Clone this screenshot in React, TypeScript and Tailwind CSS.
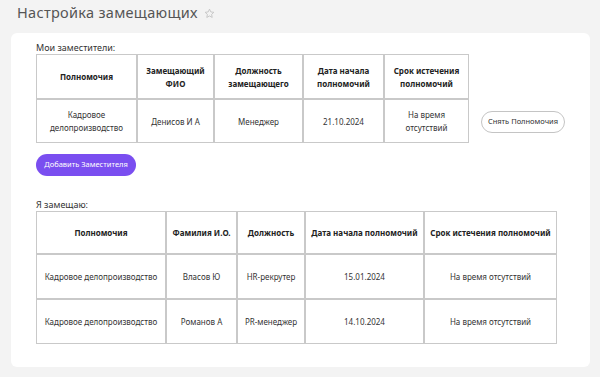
import React from 'react';

const myDeputies = [
  { power: 'Кадровое делопроизводство', name: 'Денисов И А', position: 'Менеджер', start: '21.10.2024', end: 'На время отсутствий' },
];

const iReplace = [
  { power: 'Кадровое делопроизводство', name: 'Власов Ю', position: 'HR-рекрутер', start: '15.01.2024', end: 'На время отсутствий' },
  { power: 'Кадровое делопроизводство', name: 'Романов А', position: 'PR-менеджер', start: '14.10.2024', end: 'На время отсутствий' },
];

const th = 'border border-[#c9c9c9] px-1 font-bold text-[#222] text-center align-middle leading-[13px]';
const td = 'border border-[#c9c9c9] px-1 text-[#333] text-center align-middle leading-[13px]';

const App: React.FC = () => {
  return (
    <div className="w-[600px] h-[377px] bg-[#f3f3f3] overflow-hidden" style={{ fontFamily: '"Noto Sans", Inter, sans-serif' }}>
      <div className="flex items-center gap-1.5 pl-[17px] h-[26px]">
        <h1 className="text-[14.5px] text-[#555] tracking-[0.3px]">Настройка замещающих</h1>
        <svg width="11" height="11" viewBox="0 0 24 24" fill="none" stroke="#c4c4c4" strokeWidth="2" strokeLinejoin="round">
          <path d="M12 2.5l2.9 6.1 6.6.8-4.9 4.6 1.3 6.6L12 17.3l-5.9 3.3 1.3-6.6-4.9-4.6 6.6-.8z" />
        </svg>
      </div>

      <div className="mt-[7px] ml-[11px] w-[579px] h-[334px] bg-white rounded-[6px] pl-[25px] pt-[9px]">
        <div className="text-[9px] text-[#333] leading-[12px]">Мои заместители:</div>
        <div className="flex items-center">
          <table className="table-fixed border-separate border-spacing-0 text-[8px]">
            <colgroup>
              <col className="w-[101px]" />
              <col className="w-[77px]" />
              <col className="w-[89px]" />
              <col className="w-[81px]" />
              <col className="w-[85px]" />
            </colgroup>
            <thead>
              <tr className="h-[45px]">
                <th className={th}>Полномочия</th>
                <th className={th}>Замещающий ФИО</th>
                <th className={th}>Должность замещающего</th>
                <th className={th}>Дата начала полномочий</th>
                <th className={th}>Срок истечения полномочий</th>
              </tr>
            </thead>
            <tbody>
              {myDeputies.map((r, i) => (
                <tr key={i} className="h-[44px]">
                  <td className={td}>{r.power}</td>
                  <td className={td}>{r.name}</td>
                  <td className={td}>{r.position}</td>
                  <td className={td}>{r.start}</td>
                  <td className={td}>{r.end}</td>
                </tr>
              ))}
            </tbody>
          </table>
          <div className="self-end mb-[10px] ml-[12px]">
            <button className="w-[84px] h-[22px] rounded-full border border-[#c4c4c4] bg-white text-[7.5px] text-[#333]">Снять Полномочия</button>
          </div>
        </div>

        <button className="mt-[11px] w-[100px] h-[22px] rounded-full bg-[#7a4ef0] text-white text-[7.5px]">Добавить Заместителя</button>

        <div className="mt-[23px] text-[9px] text-[#333] leading-[12px]">Я замещаю:</div>
        <table className="table-fixed border-separate border-spacing-0 text-[8px]">
          <colgroup>
            <col className="w-[130px]" />
            <col className="w-[71px]" />
            <col className="w-[68px]" />
            <col className="w-[119px]" />
            <col className="w-[133px]" />
          </colgroup>
          <thead>
            <tr className="h-[43px]">
              <th className={th}>Полномочия</th>
              <th className={th}>Фамилия И.О.</th>
              <th className={th}>Должность</th>
              <th className={th}>Дата начала полномочий</th>
              <th className={th}>Срок истечения полномочий</th>
            </tr>
          </thead>
          <tbody>
            {iReplace.map((r, i) => (
              <tr key={i} className="h-[45px]">
                <td className={td}>{r.power}</td>
                <td className={td}>{r.name}</td>
                <td className={td}>{r.position}</td>
                <td className={td}>{r.start}</td>
                <td className={td}>{r.end}</td>
              </tr>
            ))}
          </tbody>
        </table>
      </div>
    </div>
  );
};

export default App;
